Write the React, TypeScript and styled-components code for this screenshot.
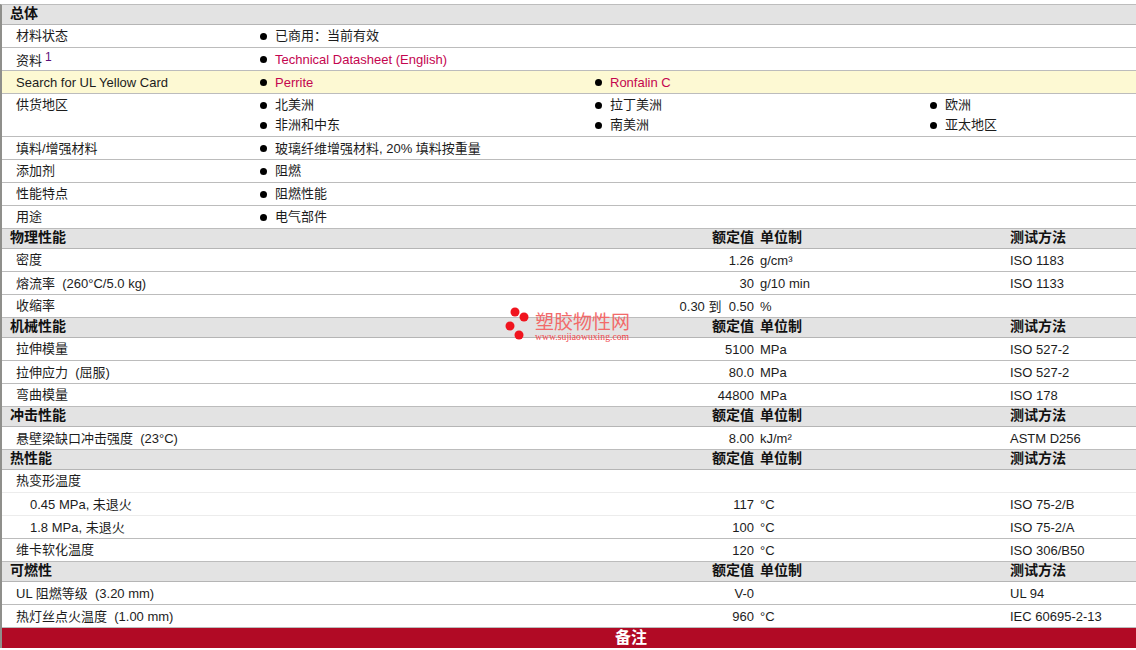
import React from "react";
import styled, { createGlobalStyle } from "styled-components";

const Global = createGlobalStyle`
  html, body { margin: 0; padding: 0; background: #fff; height: 100%; overflow: hidden; }
  body {
    font-family: "Liberation Sans", "Noto Sans CJK SC", Arial, sans-serif;
    font-size: 13px;
    color: #1c1c1c;
  }
`;

const isCjk = (s: string) => /^[\u3000-\u9fff\uff00-\uffef]+$/.test(s);

const Page = styled.div`
  position: relative;
  width: 1136px;
  height: 650px;
  padding-top: 4px;
  box-sizing: border-box;
  overflow: hidden;
`;
const Sheet = styled.div`
  border-left: 2px solid #8f8f8b;
  border-top: 1px solid #bdbdbd;
`;
const PropGrid = styled.div`
  display: grid;
  grid-template-columns: 640px 112px 256px 1fr;
`;
const SectionHead = styled(PropGrid)`
  height: 20px;
  box-sizing: border-box;
  border-bottom: 1px solid #b5b5b5;
  background: #e3e3e3;
  font-size: 14px;
  font-weight: 700;
  line-height: 16px;
  color: #111;
`;
const HeadTitle = styled.span`
  padding-left: 8px;
`;
const HeadValue = styled.span`
  text-align: right;
`;
const HeadUnit = styled.span`
  padding-left: 6px;
`;
const Row = styled.div<{ $light?: boolean; $tall?: boolean; $yellow?: boolean }>`
  display: grid;
  grid-template-columns: 258px 1fr;
  height: ${p => (p.$tall ? 43 : 23)}px;
  box-sizing: border-box;
  border-bottom: 1px solid ${p => (p.$light ? "#ececec" : "#bcbcbc")};
  background: ${p => (p.$yellow ? "#fdf9d3" : "#fff")};
  line-height: 23px;
`;
const Label = styled.div<{ $indent?: boolean; $cjk?: boolean; $sup?: boolean }>`
  padding-left: ${p => (p.$indent ? 28 : 14)}px;
  white-space: pre;
  line-height: ${p => (p.$sup ? 25 : p.$cjk ? 21 : 23)}px;
`;
const Sup = styled.sup`
  font-size: 12px;
  line-height: 0;
  color: #5b0f7a;
  margin-left: 3px;
  position: relative;
  top: 1px;
`;
const ItemGrid = styled.div`
  display: grid;
  grid-template-columns: repeat(3, 335px);
  grid-auto-rows: 20px;
`;
const Item = styled.div`
  display: flex;
  align-items: center;
  height: 23px;
`;
const Bullet = styled.span`
  width: 7px;
  height: 7px;
  border-radius: 50%;
  background: #000;
  margin-right: 8px;
  flex: none;
`;
const ItemText = styled.span<{ $cjk?: boolean }>`
  margin-bottom: ${p => (p.$cjk ? 2 : 0)}px;
`;
const Link = styled.span`
  color: #c4054f;
`;
const PropRow = styled(Row)`
  display: block;
`;
const Value = styled.span`
  text-align: right;
  white-space: pre;
`;
const Unit = styled.span`
  padding-left: 6px;
`;
const NotesBar = styled.div`
  height: 20px;
  padding-left: 124px;
  background: #b10a25;
  color: #fff;
  text-align: center;
  font-family: "Noto Sans CJK SC", serif;
  font-size: 16px;
  font-weight: 700;
  line-height: 16px;
`;
const Watermark = styled.div`
  position: absolute;
  left: 505px;
  top: 307px;
  display: flex;
  gap: 6px;
  pointer-events: none;
`;
const WmText = styled.div`
  display: flex;
  flex-direction: column;
  margin-top: 7px;
`;
const WmTitle = styled.span`
  font-size: 19px;
  line-height: 18px;
  color: #f26a6a;
  white-space: nowrap;
`;
const WmUrl = styled.span`
  font-family: "Liberation Serif", serif;
  font-size: 9.7px;
  line-height: 9px;
  color: #f0454a;
  white-space: nowrap;
`;

type P = { label: string; value: string; unit: string; test: string; indent?: boolean; light?: boolean };

const Head = ({ title, cols }: { title: string; cols?: boolean }) => (
  <SectionHead>
    <HeadTitle>{title}</HeadTitle>
    <HeadValue>{cols && "额定值"}</HeadValue>
    <HeadUnit>{cols && "单位制"}</HeadUnit>
    <span>{cols && "测试方法"}</span>
  </SectionHead>
);

const Prop = ({ label, value, unit, test, indent, light }: P) => (
  <PropRow $light={light}>
    <PropGrid>
      <Label $indent={indent} $cjk={isCjk(label)}>{label}</Label>
      <Value>{value}</Value>
      <Unit>{unit}</Unit>
      <span>{test}</span>
    </PropGrid>
  </PropRow>
);

const Info = ({ label, items, tall, yellow, links, sup }: { label: string; items: string[]; tall?: boolean; yellow?: boolean; links?: boolean; sup?: boolean }) => (
  <Row $tall={tall} $yellow={yellow}>
    <Label $cjk={isCjk(label)} $sup={sup}>
      {label}
      {sup && <Sup>1</Sup>}
    </Label>
    <ItemGrid>
      {items.map(i => (
        <Item key={i}>
          <Bullet />
          {links ? <Link>{i}</Link> : <ItemText $cjk={isCjk(i)}>{i}</ItemText>}
        </Item>
      ))}
    </ItemGrid>
  </Row>
);

export default function App() {
  return (
    <Page>
      <Global />
      <Sheet>
        <Head title="总体" />
        <Info label="材料状态" items={["已商用：当前有效"]} />
        <Info label="资料" sup items={["Technical Datasheet (English)"]} links />
        <Info label="Search for UL Yellow Card" items={["Perrite", "Ronfalin C"]} links yellow />
        <Info label="供货地区" tall items={["北美洲", "拉丁美洲", "欧洲", "非洲和中东", "南美洲", "亚太地区"]} />
        <Info label="填料/增强材料" items={["玻璃纤维增强材料, 20% 填料按重量"]} />
        <Info label="添加剂" items={["阻燃"]} />
        <Info label="性能特点" items={["阻燃性能"]} />
        <Info label="用途" items={["电气部件"]} />
        <Head title="物理性能" cols />
        <Prop label="密度" value="1.26" unit="g/cm³" test="ISO 1183" />
        <Prop label="熔流率  (260°C/5.0 kg)" value="30" unit="g/10 min" test="ISO 1133" />
        <Prop label="收缩率" value="0.30 到  0.50" unit="%" test="" />
        <Head title="机械性能" cols />
        <Prop label="拉伸模量" value="5100" unit="MPa" test="ISO 527-2" />
        <Prop label="拉伸应力  (屈服)" value="80.0" unit="MPa" test="ISO 527-2" />
        <Prop label="弯曲模量" value="44800" unit="MPa" test="ISO 178" />
        <Head title="冲击性能" cols />
        <Prop label="悬壁梁缺口冲击强度  (23°C)" value="8.00" unit="kJ/m²" test="ASTM D256" />
        <Head title="热性能" cols />
        <Prop label="热变形温度" value="" unit="" test="" light />
        <Prop label="0.45 MPa, 未退火" value="117" unit="°C" test="ISO 75-2/B" indent light />
        <Prop label="1.8 MPa, 未退火" value="100" unit="°C" test="ISO 75-2/A" indent />
        <Prop label="维卡软化温度" value="120" unit="°C" test="ISO 306/B50" />
        <Head title="可燃性" cols />
        <Prop label="UL 阻燃等级  (3.20 mm)" value="V-0" unit="" test="UL 94" />
        <Prop label="热灯丝点火温度  (1.00 mm)" value="960" unit="°C" test="IEC 60695-2-13" />
        <NotesBar>备注</NotesBar>
      </Sheet>
      <Watermark>
        <svg width="24" height="34" viewBox="0 0 24 34" aria-hidden="true">
          <circle cx="10" cy="5" r="4.5" fill="#f0141e" />
          <circle cx="19" cy="10" r="4.5" fill="#f0141e" />
          <circle cx="5" cy="19" r="4.5" fill="#f0141e" />
          <circle cx="14" cy="28" r="4.5" fill="#f0141e" />
        </svg>
        <WmText>
          <WmTitle>塑胶物性网</WmTitle>
          <WmUrl>www.sujiaowuxing.com</WmUrl>
        </WmText>
      </Watermark>
    </Page>
  );
}
